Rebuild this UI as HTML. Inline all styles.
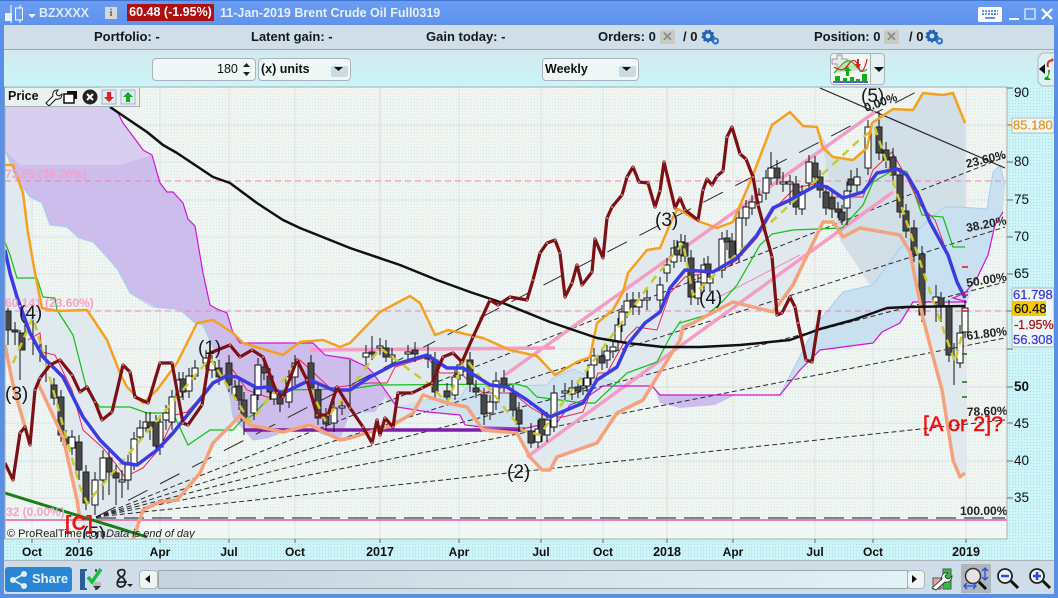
<!DOCTYPE html>
<html><head><meta charset="utf-8">
<style>
html,body{margin:0;padding:0;width:1058px;height:598px;overflow:hidden;background:#5a8fe6;font-family:"Liberation Sans",sans-serif}
.a{position:absolute}
.t{position:absolute;white-space:nowrap;font-weight:bold;line-height:16px}
.box{position:absolute;box-sizing:border-box;background:#eff8f7;border:1px solid #aab4b8;border-radius:4px}
</style></head><body>
<div class="a" style="left:0;top:0;width:1058px;height:598px;overflow:hidden">
<!-- title bar -->
<div class="a" style="left:0;top:0;width:1058px;height:25px;background:linear-gradient(#6a9df2,#5f93ec)"></div>
<div class="a" style="left:0;top:0;width:1058px;height:1px;background:#3f74d0"></div>
<div class="t" style="left:39px;top:5px;font-size:12.5px;color:#dfeafb">BZXXXX</div>
<div class="t" style="left:127px;top:4px;width:87px;height:17px;background:#b00f0f;color:#fff;font-size:12.5px;text-align:center">60.48 (-1.95%)</div>
<div class="t" style="left:220px;top:5px;font-size:12.5px;color:#e8f0fc">11-Jan-2019 Brent Crude Oil Full0319</div>
<div class="a" style="left:105px;top:7px;width:12px;height:12px;background:#d5d8d8;color:#666;font:bold 11px/12px 'Liberation Serif',serif;text-align:center">i</div>
<svg class="a" style="left:3px;top:4px" width="34" height="20"><path d="M8 1v18M17 1v18" stroke="#fff" fill="none"/><rect x="2" y="9" width="7" height="8" fill="#eaf2ff"/><rect x="12.500" y="4" width="7" height="12" fill="#6a9df2" stroke="#fff"/><path d="M25 10h8l-4 4z" fill="#e6effc"/></svg>
<svg class="a" style="left:976px;top:5px" width="80" height="20"><rect x="2" y="2" width="24" height="15" rx="2" fill="#fff"/><path d="M6 6h16M6 9h16" stroke="#5f93ec" stroke-width="2" stroke-dasharray="2 1"/><path d="M9 13h10" stroke="#5f93ec" stroke-width="2"/><path d="M33 14h10" stroke="#fff" stroke-width="2"/><rect x="49" y="4" width="10" height="10" fill="none" stroke="#cfe0f8" stroke-width="1.500"/><path d="M66 4l10 10M76 4l-10 10" stroke="#fff" stroke-width="2.200"/></svg>
<!-- row 2 -->
<div class="a" style="left:4px;top:25px;width:1050px;height:25px;background:#cfdee8;border-bottom:1px solid #9eaab2;box-sizing:border-box"></div>
<div class="t" style="left:94px;top:29px;font-size:13px;color:#12181c">Portfolio: -</div>
<div class="t" style="left:251px;top:29px;font-size:13px;color:#12181c">Latent gain: -</div>
<div class="t" style="left:426px;top:29px;font-size:13px;color:#12181c">Gain today: -</div>
<div class="t" style="left:598px;top:29px;font-size:13px;color:#12181c">Orders: 0</div>
<div class="a" style="left:660px;top:30px;width:15px;height:14px;background:#c9c9c6;color:#8d8d8d;font:bold 13px/14px 'Liberation Sans';text-align:center">✕</div>
<div class="t" style="left:683px;top:29px;font-size:13px;color:#12181c">/ 0</div>
<div class="t" style="left:814px;top:29px;font-size:13px;color:#12181c">Position: 0</div>
<div class="a" style="left:884px;top:30px;width:15px;height:14px;background:#c9c9c6;color:#8d8d8d;font:bold 13px/14px 'Liberation Sans';text-align:center">✕</div>
<div class="t" style="left:909px;top:29px;font-size:13px;color:#12181c">/ 0</div>
<svg class="a" style="left:701px;top:29px" width="20" height="17"><circle cx="7" cy="7" r="4" fill="none" stroke="#1f5fb8" stroke-width="3"/><circle cx="7" cy="7" r="5.800" fill="none" stroke="#1f5fb8" stroke-width="1.500" stroke-dasharray="2 2"/><circle cx="14.500" cy="12" r="2.500" fill="none" stroke="#2a70c8" stroke-width="2"/></svg>
<svg class="a" style="left:925px;top:29px" width="20" height="17"><circle cx="7" cy="7" r="4" fill="none" stroke="#1f5fb8" stroke-width="3"/><circle cx="7" cy="7" r="5.800" fill="none" stroke="#1f5fb8" stroke-width="1.500" stroke-dasharray="2 2"/><circle cx="14.500" cy="12" r="2.500" fill="none" stroke="#2a70c8" stroke-width="2"/></svg>
<!-- row 3 -->
<div class="a" style="left:4px;top:50px;width:1050px;height:37px;background:linear-gradient(#d3e9ee,#c9f5f9)"></div>
<div class="box" style="left:152px;top:58px;width:104px;height:23px"></div>
<div class="t" style="left:217px;top:61px;font-size:12.5px;font-weight:normal;color:#111">180</div>
<svg class="a" style="left:240px;top:61px" width="14" height="17"><path d="M3 6l3.500-4 3.500 4zM3 11l3.500 4 3.500-4z" fill="#222"/></svg>
<div class="box" style="left:258px;top:58px;width:93px;height:23px"></div>
<div class="t" style="left:261px;top:61px;font-size:12.5px;color:#111">(x) units</div>
<svg class="a" style="left:331px;top:63px" width="18" height="15"><rect x="0" y="3" width="17" height="11" fill="#c9dbe3" rx="2"/><path d="M3 4h9l-4.500 4z" fill="#111"/></svg>
<div class="box" style="left:542px;top:58px;width:97px;height:23px"></div>
<div class="t" style="left:545px;top:61px;font-size:12.5px;color:#111">Weekly</div>
<svg class="a" style="left:619px;top:63px" width="18" height="15"><rect x="0" y="3" width="17" height="11" fill="#c9dbe3" rx="2"/><path d="M3 4h9l-4.500 4z" fill="#111"/></svg>
<div class="box" style="left:830px;top:53px;width:41px;height:32px;border-radius:4px 0 0 4px"></div>
<div class="box" style="left:870px;top:53px;width:15px;height:32px;border-radius:0 4px 4px 0;background:#e6f1f1"></div>
<svg class="a" style="left:830px;top:53px" width="55" height="32"><path d="M2 6h5V2h5v4h5v5h-5v5H7v-5H2z" fill="#e9e9e9" stroke="#999"/><path d="M4 20C10 14 14 7 20 8s10 16 17 8" fill="#c6dfb4" stroke="#2faa2f" stroke-width="1.200"/><path d="M4 14C10 18 14 18 18 12S26 4 30 18c3 2 6-6 7-12" fill="none" stroke="#d22" stroke-width="1.200"/><path d="M16 23v-5h-2l3.500-5 3.500 5h-2v5z" fill="#10b010"/><path d="M27 6v5h-2l3 5 3-5h-2V6z" fill="#e02020"/><path d="M3 29h35" stroke="#2a2ac0" stroke-width="1.500"/><path d="M5 23h5v5H5zM13 25h4v3h-4zM20 24h4v4h-4zM26 26h4v2h-4zM32 21h5v7h-5z" fill="#10b010"/><path d="M44 14h10l-5 5z" fill="#111"/></svg>
<svg class="a" style="left:1036px;top:51px" width="20" height="38"><path d="M6 2h14v33H6l-4-4V7z" fill="#dff2f3" stroke="#aab4b8"/><path d="M3 18l6-5v10z" fill="#111"/><path d="M11 16c-1-4 0-7 5-8l-1-2 3 3-3 3 1-2c-3 1-4 3-3 6z" fill="#e03020"/><path d="M12 19c1 4 0 7-4 8l1 2 6 0-3-3c1-2 2-4 2-7z" fill="#10a010"/></svg>
<!-- chart svg -->
<svg class="a" style="left:0;top:0" width="1058" height="598" viewBox="0 0 1058 598">
<defs>
<clipPath id="cp"><rect x="5" y="87" width="1002" height="452"/></clipPath>
<pattern id="dit" width="3" height="3" patternUnits="userSpaceOnUse"><rect width="3" height="3" fill="#f0f6f3"/><rect x="0" y="0" width="1" height="1" fill="#d5e6ee"/><rect x="2" y="1" width="1" height="1" fill="#f3efd8"/></pattern>
<pattern id="cy" width="3" height="3" patternUnits="userSpaceOnUse"><rect width="3" height="3" fill="#cdf5f8"/><rect x="1" y="1" width="1" height="1" fill="#a8dcec"/></pattern>
<marker id="dot" markerWidth="3" markerHeight="3" refX="1.500" refY="1.500" markerUnits="userSpaceOnUse"><circle cx="1.500" cy="1.500" r="0.800" fill="#efd9d9"/></marker>
</defs>
<rect x="1007" y="87" width="47" height="453" fill="url(#cy)"/>
<rect x="4" y="539" width="1050" height="21" fill="url(#cy)"/>
<rect x="5" y="87" width="1002" height="452" fill="url(#dit)"/>
<rect x="5" y="520" width="1002" height="19" fill="#f0f7f5"/>
<g clip-path="url(#cp)">
<!-- grid -->
<path d="M5 125H1007M5 162H1007M5 200H1007M5 237H1007M5 274H1007M5 311H1007M5 349H1007M5 387H1007M5 423H1007M5 461H1007M5 498H1007M32 87V539M79 87V539M160 87V539M229 87V539M295 87V539M380 87V539M459 87V539M541 87V539M603 87V539M667 87V539M733 87V539M815 87V539M873 87V539M966 87V539" stroke="#dce4e8" stroke-width="1" fill="none"/>
<path d="M79 87V539M380 87V539M667 87V539M966 87V539M5 387H1007" stroke="#e4d8dc" stroke-width="1" fill="none"/>
<!-- bollinger fill -->
<path d="M5 165L13 165 23 193 28 233 35 273 42 308 57 311 87 310 107 340 120 373 127 387 143 403 157 390 177 363 197 323 213 320 233 333 243 343 283 355 300 342 323 340 340 347 350 343 380 312 410 296 420 303 435 335 448 330 483 338 510 350 537 356 555 375 577 362 590 357 597 323 623 292 628 273 647 250 660 248 673 217 678 209 698 221 717 228 733 222 753 175 772 125 790 112 803 126 817 127 823 148 833 157 853 160 867 148 872 123 893 109 913 110 923 93 943 95 953 93 965 123V473L960 477 953 460 942 390 932 353 923 318 910 252 900 235 860 228 843 237 833 222 823 222 793 285 773 312 733 302 693 323 680 340 657 377 643 400 617 413 597 443 577 450 557 457 550 470 542 470 530 457 517 433 483 430 467 407 447 403 423 395 413 413 393 425 350 438 340 440 310 425 283 432 233 423 213 443 200 473 177 500 160 502 143 510 133 540H85L77 500 63 437 38 383 25 427 13 385 5 345Z" fill="#e0e9ed"/>
<path d="M820 132L833 157 853 160 867 148 872 123 893 109 913 110 923 93 943 95 953 93 965 123V300H880L840 240Z" fill="#d2dfe7"/>
<!-- purple cloud -->
<path d="M100 87L118 113 123 123 138 143 143 150 152 155 160 183 167 192 173 192 183 203 188 219 195 226 203 273 210 305 217 309 227 313 233 333 240 343 313 343 325 355 350 357 367 367 373 373 397 407 385 397 375 412 350 413 340 440 320 433 310 425 283 432 267 438 253 440 233 417 230 397 213 347 203 325 195 323 180 310 157 308 130 293 118 270 107 257 93 242 79 238 67 227 50 225 42 203 30 197 17 180 5 150V87Z" fill="#cdbded"/>
<path d="M5 87H100L118 113 123 123 138 143 143 150 152 155 120 165H20L5 150Z" fill="#d8cef0"/>
<path d="M5 150L17 180 30 197 42 203 50 225 67 227 79 238 93 242 107 257 118 270 130 293 153 307 170 308 180 310 195 323 203 325 213 347 230 397 233 417 253 440 267 438 283 432 310 425 320 433 340 440" fill="none" stroke="#9fd2ea" stroke-width="1"/>
<path d="M655 390L662 395H735L715 405 680 408 660 403Z" fill="#cdbded"/>
<!-- blue clouds -->
<path d="M423 400L460 398 467 387 547 385 553 378 573 369 590 377 617 382 624 386 652 386 603 386 570 405 555 425 527 428 482 427 465 425 460 415 428 412 397 407Z" fill="#cfe3ee"/>
<path d="M423 400L460 398 467 387 547 385 553 378 573 369 590 377 617 382 624 386 652 386" fill="none" stroke="#a9d2ee"/>
<path d="M735 395L780 395 817 323 843 292 873 285 900 248 930 218 945 207 960 207 987 209 993 172 1000 165 1005 185 1003 212 995 225 988 255 977 278 967 302 913 302 900 323 882 332 873 343 820 350 800 370 780 395Z" fill="#c8e0f0"/>
<path d="M735 395L780 395 817 323 843 292 873 285 900 248 930 218 945 207 960 207 987 209 993 172 1000 165 1005 185" fill="none" stroke="#a6cfee"/>
<!-- fib dashed -->
<path d="M5 181H1007M5 311H1007" stroke="#f080b8" stroke-dasharray="6 4" fill="none"/>
<path d="M5 520H1007" stroke="#e85aa0" stroke-width="1.500"/>
<!-- fan -->
<g fill="none" stroke="#2a2a2a">
<path d="M96 517L918 91" stroke-dasharray="22 14"/>
<path d="M96 517L1005 157" stroke-dasharray="5 3"/>
<path d="M96 517L1005 227" stroke-dasharray="5 3"/>
<path d="M96 517L1005 282" stroke-dasharray="5 3"/>
<path d="M96 517L1005 338" stroke-dasharray="5 3"/>
<path d="M96 517L1005 420" stroke-dasharray="5 3"/>
<path d="M96 518H1005" stroke-dasharray="20 8" stroke="#111"/>
<path d="M820 88L1005 168" stroke="#222" stroke-width="1.200"/>
</g>
<!-- pink channels -->
<path d="M505 375L875 112M527 457L893 192M310 350L555 348" stroke="#f59cc6" stroke-width="3.500" fill="none"/>
<path d="M717 298L800 255" stroke="#f08ac0" stroke-width="1" fill="none"/>
<path d="M244 430H525" stroke="#7a1fa8" stroke-width="3.500"/>
<!-- thin magenta -->
<path d="M118 113L123 123 138 143 143 150 152 155 160 183 167 192 173 192 183 203 188 219 195 226 203 273 210 305 217 309 227 313 233 333 240 343 313 343 325 355 350 359 367 367 373 373 397 407 428 412 460 415 465 425 482 427 527 428 535 426 555 425 570 405 583 400 603 386 652 386 660 395 780 395 800 370 820 350 873 343 882 332 900 323 913 302 967 302 953 298 965 293 977 278 988 255 995 225 1003 212" fill="none" stroke="#d414d4" stroke-width="1.200"/>
<!-- green thin -->
<path d="M5 242L10 255 17 278 37 278 43 297 55 298 57 310 73 335 87 390 100 407 130 407 147 413 173 413 188 445 210 430 233 430 240 422 253 415 267 400 283 390 350 389 377 385 517 384 527 387 537 397 583 403 595 403 627 373 657 362 670 337 680 322 680 323 707 315 723 301 737 285 760 245 772 234 793 230 842 228 863 205 873 182 897 168 907 172 922 215 943 217 953 247 965 247" fill="none" stroke="#10c010" stroke-width="1.200"/>
<!-- red thin -->
<path d="M28 340L40 333 42 352 55 355 72 390 83 430 103 448 115 463 125 477 143 468 160 448 175 415 187 412 217 380 233 370 247 390 267 397 283 397 300 360 330 388 370 383 387 383 395 367 427 357 440 373 460 373 483 393 513 393 530 407 547 417 563 417 583 412 598 373 607 373 627 337 637 327 657 330 670 293 685 277 723 270 737 260 757 238 775 208 795 188 820 183 827 197 863 197 873 170 892 152 908 180 920 205 935 220 948 255" fill="none" stroke="#f02050" stroke-width="1"/>
<!-- wicks -->
<path d="M8 308V345M15 322V345M20 330V380M25 318V350M33 320V355M40 340V362M46 345V382M54 378V405M61 390V442M66 430V450M72 430V455M79 435V480M86 465V510M95 472V515M103 450V500M109 450V495M116 465V505M122 470V498M128 455V490M134 432V470M140 420V440M146 412V432M150 412V440M156 415V450M160 415V455M166 405V430M172 390V430M179 372V405M183 372V400M189 368V398M195 360V380M206 350V370M212 355V378M219 360V385M229 355V392M235 380V400M239 380V410M244 392V435M254 388V420M258 358V400M264 360V380M270 368V400M274 385V405M280 390V412M289 370V408M295 355V385M311 355V395M318 382V425M326 408V430M334 400V432M342 398V415M350 360V410M366 345V365M372 336V360M380 338V355M386 340V362M392 348V365M408 345V360M415 342V362M428 345V368M435 352V400M447 383V405M455 370V400M460 358V380M470 352V392M476 380V398M484 388V425M490 395V420M496 372V410M504 370V392M513 385V418M519 402V432M531 423V448M538 420V448M542 410V442M547 412V442M554 385V432M565 383V400M572 380V400M578 380V398M583 378V395M587 370V392M591 358V385M594 348V372M602 348V370M607 345V368M613 340V358M618 318V350M622 305V332M627 293V318M633 292V315M639 292V315M647 288V310M660 277V308M667 258V282M674 240V268M677 240V262M681 234V262M685 235V262M691 250V305M698 275V305M704 258V292M708 256V282M710 268V292M722 232V278M727 230V250M732 233V265M739 210V262M746 200V226M752 195V215M759 188V210M766 170V200M771 152V185M777 160V185M783 172V192M790 175V205M796 176V215M802 185V215M809 155V190M815 156V185M820 170V198M826 185V215M832 190V218M838 202V218M842 205V225M847 182V225M851 170V192M857 168V192M868 120V175M879 112V160M886 142V168M893 148V185M900 168V218M906 204V238M914 220V262M922 246V322M936 285V322M941 292V322M949 300V362M954 343V385M960 325V368M965 300V338" stroke="#111" stroke-width="1" fill="none"/>
<!-- white bodies -->
<path d="M69 437h6v11h-6zM92 480h6v25h-6zM100 458h6v22h-6zM119 480h6v2h-6zM125 465h6v15h-6zM131 439h6v26h-6zM137 428h6v9h-6zM143 422h6v6h-6zM157 422h6v25h-6zM163 413h6v7h-6zM169 397h6v25h-6zM176 380h6v17h-6zM186 376h6v15h-6zM192 368h6v8h-6zM203 358h6v5h-6zM209 362h6v8h-6zM232 387h6v8h-6zM251 395h6v18h-6zM255 365h6v30h-6zM271 393h6v6h-6zM286 377h6v25h-6zM292 363h6v14h-6zM331 408h6v15h-6zM339 406h6v2h-6zM363 353h6v4h-6zM377 346h6v2h-6zM389 355h6v2h-6zM405 352h6v2h-6zM452 377h6v18h-6zM457 365h6v10h-6zM487 402h6v11h-6zM493 381h6v21h-6zM535 429h6v13h-6zM544 420h6v15h-6zM551 393h6v34h-6zM562 391h6v2h-6zM569 388h6v6h-6zM580 386h6v2h-6zM584 378h6v8h-6zM588 365h6v13h-6zM591 356h6v9h-6zM604 351h6v9h-6zM610 347h6v4h-6zM615 325h6v17h-6zM619 312h6v13h-6zM624 301h6v11h-6zM636 300h6v7h-6zM644 298h6v2h-6zM657 285h6v15h-6zM664 265h6v8h-6zM671 248h6v14h-6zM678 242h6v13h-6zM695 282h6v16h-6zM701 265h6v18h-6zM707 277h6v6h-6zM719 239h6v31h-6zM736 218h6v37h-6zM743 207h6v11h-6zM749 202h6v6h-6zM756 195h6v7h-6zM763 178h6v15h-6zM768 168h6v10h-6zM780 182h6v2h-6zM787 182h6v2h-6zM799 192h6v17h-6zM806 162h6v21h-6zM844 191h6v17h-6zM854 177h6v8h-6zM865 127h6v41h-6zM933 297h6v5h-6zM957 333h6v30h-6zM962 308h6v24h-6z" fill="#fff" stroke="#111" stroke-width="1"/>
<!-- dark bodies -->
<path d="M5 311h6v19h-6zM12 330h6v2h-6zM19 333h6v17h-6zM51 385h6v13h-6zM58 397h6v38h-6zM63 437h6v8h-6zM76 442h6v28h-6zM83 472h6v31h-6zM106 458h6v14h-6zM113 473h6v5h-6zM147 422h6v5h-6zM153 422h6v24h-6zM180 379h6v13h-6zM216 368h6v9h-6zM226 363h6v22h-6zM236 386h6v14h-6zM241 400h6v20h-6zM261 367h6v6h-6zM267 376h6v16h-6zM277 397h6v7h-6zM308 363h6v25h-6zM315 390h6v28h-6zM323 415h6v9h-6zM369 352h6v2h-6zM383 348h6v9h-6zM412 350h6v4h-6zM425 355h6v4h-6zM432 360h6v32h-6zM444 391h6v6h-6zM467 360h6v24h-6zM473 388h6v4h-6zM481 395h6v19h-6zM501 378h6v7h-6zM510 393h6v17h-6zM516 410h6v14h-6zM528 431h6v12h-6zM539 419h6v16h-6zM575 387h6v4h-6zM599 356h6v7h-6zM630 300h6v7h-6zM674 247h6v8h-6zM682 243h6v13h-6zM688 258h6v39h-6zM705 264h6v9h-6zM724 238h6v4h-6zM729 241h6v17h-6zM774 168h6v10h-6zM793 184h6v23h-6zM812 163h6v14h-6zM817 177h6v13h-6zM823 192h6v16h-6zM829 198h6v11h-6zM835 209h6v3h-6zM839 212h6v8h-6zM848 179h6v6h-6zM876 127h6v26h-6zM883 150h6v10h-6zM890 157h6v18h-6zM897 175h6v37h-6zM903 211h6v20h-6zM911 228h6v27h-6zM919 254h6v61h-6zM938 298h6v9h-6zM946 307h6v48h-6z" fill="#484848" stroke="#222" stroke-width="1"/>
<!-- zigzag -->
<path d="M13 363L33 317 80 487 87 503 210 358 250 422 298 362 325 420 350 390 380 348 430 385 447 403 465 358 522 430 540 435 550 420 653 280 683 243 693 295 857 142 875 128 937 312 955 362 963 330" fill="none" stroke="#c9c932" stroke-width="2.500" stroke-dasharray="8 6"/>
<!-- orange -->
<path d="M5 165L13 165 23 193 28 233 35 273 42 308 57 311 87 310 107 340 120 373 127 387 143 403 157 390 177 363 197 323 213 320 233 333 243 343 283 355 300 342 323 340 340 347 350 343 380 312 410 296 420 303 435 335 448 330 483 338 510 350 537 356 555 375 577 362 590 357 597 323 613 310 623 292 628 273 647 250 660 248 673 217 678 209 698 221 717 228 733 222 753 175 772 125 790 112 803 126 817 127 823 148 833 157 853 160 867 148 872 123 893 109 913 110 923 93 943 95 953 93 965 123" fill="none" stroke="#f5a01e" stroke-width="2.500" stroke-linejoin="round"/>
<!-- salmon -->
<path d="M5 345L13 385 25 427M38 383L63 437 77 500 80 520M133 540L143 510 160 502 177 500 200 473 213 443 233 423 240 415 250 425 283 432 310 425 340 440 350 438 393 425 413 413 423 395 447 403 467 407 483 430 517 433 530 457 542 470 550 470 557 457 577 450 597 443 617 413 643 400 657 377 680 340 683 327 693 323 733 302 773 312 793 285 823 222 833 222 843 237 860 228 900 235 910 252 923 318 932 353 942 390 953 460 960 477 965 473" fill="none" stroke="#f5a27c" stroke-width="3.500" stroke-linejoin="round"/>
<!-- black ma -->
<path d="M110 107L147 132 163 145 177 153 213 177 230 183 257 203 263 207 283 220 300 228 350 248 400 265 437 280 470 292 503 303 550 322 597 338 627 343 663 347 700 347 740 345 790 340 820 329 853 320 887 308 907 307 965 306" fill="none" stroke="#111" stroke-width="2.500" stroke-linejoin="round"/>
<!-- blue -->
<path d="M5 250L10 273 17 297 30 333 43 357 63 377 83 417 100 440 123 463 137 465 157 450 173 433 197 403 213 383 227 376 237 377 257 388 267 387 283 393 310 380 333 390 350 390 370 377 393 365 427 355 447 368 463 368 490 385 507 387 527 400 550 417 583 403 597 380 617 367 627 345 645 323 660 312 670 288 685 270 713 272 737 258 757 235 773 208 790 200 817 185 827 187 843 198 863 192 877 173 897 169 907 175 917 192 930 222 948 255 957 282 965 298" fill="none" stroke="#3b3be2" stroke-width="3.500" stroke-linejoin="round"/>
<!-- dark red -->
<path d="M5 463L13 480 20 433 25 427 30 445 35 390 40 378 50 365 60 360 72 375 80 392 87 387 95 402 102 420 112 412 123 365 130 372 135 397 148 403 160 363 172 363 183 423 188 425 202 405 210 353 230 345 240 357 252 350 263 357 277 393 283 397 297 360 307 380 317 415 328 415 337 387 350 408 363 427 372 443 377 420 380 435 385 418 393 427 398 393 412 393 422 388 432 383 443 357 453 353 462 362 473 337 490 300 498 305 510 297 527 300 533 280 540 253 547 243 555 240 560 253 565 297 572 283 577 265 582 285 592 272 595 239 603 258 607 218 612 207 622 195 627 177 633 167 639 182 648 183 655 207 660 191 664 162 675 208 680 198 685 210 698 220 703 190 707 179 712 185 717 176 723 171 727 137 732 127 740 154 746 159 753 177 758 205 772 257 777 315 782 313 790 297 795 307 798 323 806 360 812 362 820 310" fill="none" stroke="#7c1014" stroke-width="3.200" stroke-linejoin="round" marker-mid="url(#dot)"/>
<!-- green tl -->
<path d="M5 493L147 537" stroke="#1a7d1a" stroke-width="3"/>
<!-- ticks -->
<path d="M962 267h6M962 295h6M962 311h6" stroke="#e01010" stroke-width="1.500"/>
<path d="M962 354h5M962 382h5M962 397h5" stroke="#107010" stroke-width="1.500"/>
<!-- labels -->
<g font-family="Liberation Sans" font-size="12" font-weight="bold" fill="#f7a0c8">
<text x="5" y="178">73.55 (38.20%)</text>
<text x="5" y="307">60.141 (23.60%)</text>
<text x="6" y="516">32 (0.00%)</text>
</g>
<g font-family="Liberation Sans" font-size="19" fill="#16161e">
<text x="5" y="400">(3)</text><text x="19" y="319">(4)</text><text x="198" y="354">(1)</text><text x="82" y="540">(5)</text><text x="507" y="478">(2)</text><text x="655" y="226">(3)</text><text x="699" y="304">(4)</text><text x="861" y="102">(5)</text>
</g>
<g font-family="Liberation Sans" font-size="12" font-weight="bold" fill="#222">
<text x="866" y="112" transform="rotate(-20 866 112)">0.00%</text>
<text x="967" y="168" transform="rotate(-14 967 168)">23.60%</text>
<text x="967" y="232" transform="rotate(-11 967 232)">38.20%</text>
<text x="967" y="287" transform="rotate(-9 967 287)">50.00%</text>
<text x="967" y="340" transform="rotate(-7 967 340)">61.80%</text>
<text x="967" y="416" transform="rotate(-2 967 416)">78.60%</text>
<text x="960" y="515">100.00%</text>
</g>
<text x="65" y="530" font-family="Liberation Sans" font-size="20" font-weight="bold" fill="#f01010">[C]</text>
<text x="923" y="431" font-family="Liberation Sans" font-size="21.500" fill="#f01010" stroke="#f01010" stroke-width="0.500">[A or 2]?</text>
<text x="7" y="537" font-family="Liberation Sans" font-size="11" fill="#222">© ProRealTime.com</text>
<text x="106" y="537" font-family="Liberation Sans" font-size="11" font-style="italic" fill="#222">Data is end of day</text>
</g>
<rect x="5" y="87" width="1002" height="452" fill="none" stroke="#a6aeb2"/>
<!-- axis ticks -->
<path d="M1007 88h6M1007 162h6M1007 200h6M1007 237h6M1007 274h6M1007 311h6M1007 349h6M1007 387h6M1007 423h6M1007 461h6M1007 498h6M32 539v4M79 539v4M160 539v4M229 539v4M295 539v4M380 539v4M459 539v4M541 539v4M603 539v4M667 539v4M733 539v4M815 539v4M873 539v4M966 539v4" stroke="#666" fill="none"/>
<!-- price axis -->
<g font-family="Liberation Sans" font-size="13.500" fill="#111">
<text x="1014" y="97">90</text><text x="1014" y="166">80</text><text x="1014" y="204">75</text><text x="1014" y="241">70</text><text x="1014" y="278">65</text><text x="1014" y="391" font-weight="bold">50</text><text x="1014" y="428">45</text><text x="1014" y="465">40</text><text x="1014" y="502">35</text>
</g>
<rect x="1012" y="118" width="42" height="15" fill="#eaf8f8" stroke="#b8bcc0"/>
<path d="M1007 125h5" stroke="#f5a01e" stroke-width="2"/>
<text x="1013" y="129.500" font-family="Liberation Sans" font-size="13" fill="#f0941a" stroke="#f0941a" stroke-width="0.250">85.180</text>
<rect x="1012" y="288" width="42" height="59" fill="#eef7f7" stroke="#b0b6ba"/>
<rect x="1012" y="301" width="34" height="15" fill="#f7c800"/>
<text x="1013" y="299" font-family="Liberation Sans" font-size="13" fill="#3a3ae0" stroke="#3a3ae0" stroke-width="0.250">61.798</text>
<text x="1014" y="313" font-family="Liberation Sans" font-size="13" fill="#111" stroke="#111" stroke-width="0.250">60.48</text>
<text x="1014" y="329" font-family="Liberation Sans" font-size="12.500" fill="#a81010" stroke="#a81010" stroke-width="0.250">-1.95%</text>
<text x="1013" y="344" font-family="Liberation Sans" font-size="13" fill="#3a3ae0" stroke="#3a3ae0" stroke-width="0.250">56.308</text>
<!-- time axis -->
<g font-family="Liberation Sans" font-size="12" font-weight="bold" fill="#111" text-anchor="middle">
<text x="32" y="556">Oct</text><text x="79" y="556" font-size="12.500">2016</text><text x="160" y="556">Apr</text><text x="229" y="556">Jul</text><text x="295" y="556">Oct</text><text x="380" y="556" font-size="12.500">2017</text><text x="459" y="556">Apr</text><text x="541" y="556">Jul</text><text x="603" y="556">Oct</text><text x="667" y="556" font-size="12.500">2018</text><text x="733" y="556">Apr</text><text x="815" y="556">Jul</text><text x="873" y="556">Oct</text><text x="966" y="556" font-size="12.500">2019</text>
</g>
</svg>
<!-- price panel -->
<div class="a" style="left:5px;top:88px;width:135px;height:19px;background:#eaf2f0;border-right:1px solid #a6aeb2;border-bottom:1px solid #a6aeb2;box-sizing:border-box"></div>
<div class="t" style="left:8px;top:88px;font-size:12.5px;color:#111">Price</div>
<svg class="a" style="left:44px;top:88px" width="96" height="18"><path d="M2 15l7-7c-1-3 1-6 5-6l-2 3 1 2 2 1 3-2c0 4-3 6-6 5l-7 7z" fill="#fff" stroke="#111"/><rect x="23" y="3" width="10" height="8" fill="#111"/><rect x="20" y="6" width="10" height="9" fill="#fff" stroke="#111" stroke-width="1.500"/><circle cx="46" cy="9" r="7.500" fill="#222"/><path d="M43 6l6 6M49 6l-6 6" stroke="#fff" stroke-width="2"/><rect x="58" y="2" width="14" height="14" fill="#dfeaf2" stroke="#9fb6c8"/><path d="M63 4h4v5h3l-5 5-5-5h3z" fill="#e02020"/><rect x="77" y="2" width="14" height="14" fill="#dfeaf2" stroke="#9fb6c8"/><path d="M82 14h4V9h3l-5-5-5 5h3z" fill="#10b020"/></svg>
<!-- bottom bar -->
<div class="a" style="left:4px;top:560px;width:1050px;height:34px;background:#cfdde8;border-top:1px solid #aab4ba;box-sizing:border-box"></div>
<div class="a" style="left:5px;top:567px;width:67px;height:25px;background:#2a86d2;border-radius:3px"></div>
<div class="t" style="left:32px;top:571px;font-size:13px;color:#e8f4ff">Share</div>
<svg class="a" style="left:8px;top:570px" width="22" height="20"><path d="M16 4L5 10l11 6" stroke="#dceefa" stroke-width="1.800" fill="none"/><circle cx="16" cy="4" r="3" fill="#dceefa"/><circle cx="5" cy="10" r="3" fill="#dceefa"/><circle cx="16" cy="16" r="3" fill="#dceefa"/></svg>
<svg class="a" style="left:78px;top:567px" width="26" height="26"><path d="M2 2h5v21H2z" fill="#2a5f9a"/><path d="M6 2h3v2H6zM6 21h3v2H6z" fill="#2a5f9a"/><path d="M18 2v3M18 21v2" stroke="#555" stroke-width="2"/><path d="M10 10l4 5 9-13" stroke="#10c040" stroke-width="3.500" fill="none"/><path d="M15 19h8l-4 4z" fill="#333"/><rect x="15" y="15" width="8" height="4" fill="#bbb"/></svg>
<svg class="a" style="left:112px;top:567px" width="24" height="26"><path d="M8 3c6-2 6 4 2 7 4 3 5 9-1 10-5 0-5-6 0-10-4-3-4-6-1-7zM5 15h10" fill="none" stroke="#222" stroke-width="1.800"/><path d="M15 17h6l-3 3z" fill="#222"/></svg>
<div class="a" style="left:158px;top:570px;width:750px;height:19px;background:linear-gradient(90deg,#c3d4df,#cfdfe8 35%,#e0f2f6);border:1px solid #9aa6ac;box-sizing:border-box"></div>
<div class="box" style="left:139px;top:570px;width:19px;height:19px;background:#edf5f5"></div>
<div class="box" style="left:907px;top:570px;width:18px;height:19px;background:#edf5f5"></div>
<svg class="a" style="left:139px;top:570px" width="790" height="19"><path d="M11 5v8l-5-4zM773 5v8l5-4z" fill="#111"/></svg>
<svg class="a" style="left:930px;top:563px" width="125" height="30"><rect x="31" y="1" width="30" height="29" fill="#aeb7bc"/><rect x="3" y="15" width="8" height="11" fill="#e8a0a8" stroke="#555"/><rect x="13" y="6" width="8" height="20" fill="#30c040" stroke="#555"/><path d="M2 25l10-9c-1-4 2-7 6-6l-3 3 1 2 3 1 3-3c0 4-3 7-7 6l-9 8z" fill="#fff" stroke="#222" stroke-width=".8"/><circle cx="43" cy="13" r="7.500" fill="#e4e4e4" stroke="#333" stroke-width="1.500"/><path d="M49 19l7 7" stroke="#111" stroke-width="3"/><path d="M55 5v12M52 8l3-3 3 3M52 14l3 3 3-3M34 23h12M37 20l-3 3 3 3M43 20l3 3-3 3" stroke="#2a4ae0" stroke-width="1.300" fill="none"/><circle cx="75" cy="13" r="7" fill="#eef3f6" stroke="#222" stroke-width="1.800"/><path d="M71 13h8" stroke="#2a4ae0" stroke-width="2.500"/><path d="M81 18l7 7" stroke="#111" stroke-width="3"/><circle cx="107" cy="13" r="7" fill="#eef3f6" stroke="#222" stroke-width="1.800"/><path d="M103 13h8M107 9v8" stroke="#2a4ae0" stroke-width="2.500"/><path d="M113 18l7 7" stroke="#111" stroke-width="3"/></svg>
<!-- frame -->
<div class="a" style="left:0;top:25px;width:4px;height:573px;background:#5a8fe6"></div>
<div class="a" style="right:0;top:25px;width:4px;height:573px;background:#5a8fe6"></div>
<div class="a" style="left:0;top:594px;width:1058px;height:4px;background:#5a8fe6"></div>
</div>
</body></html>
